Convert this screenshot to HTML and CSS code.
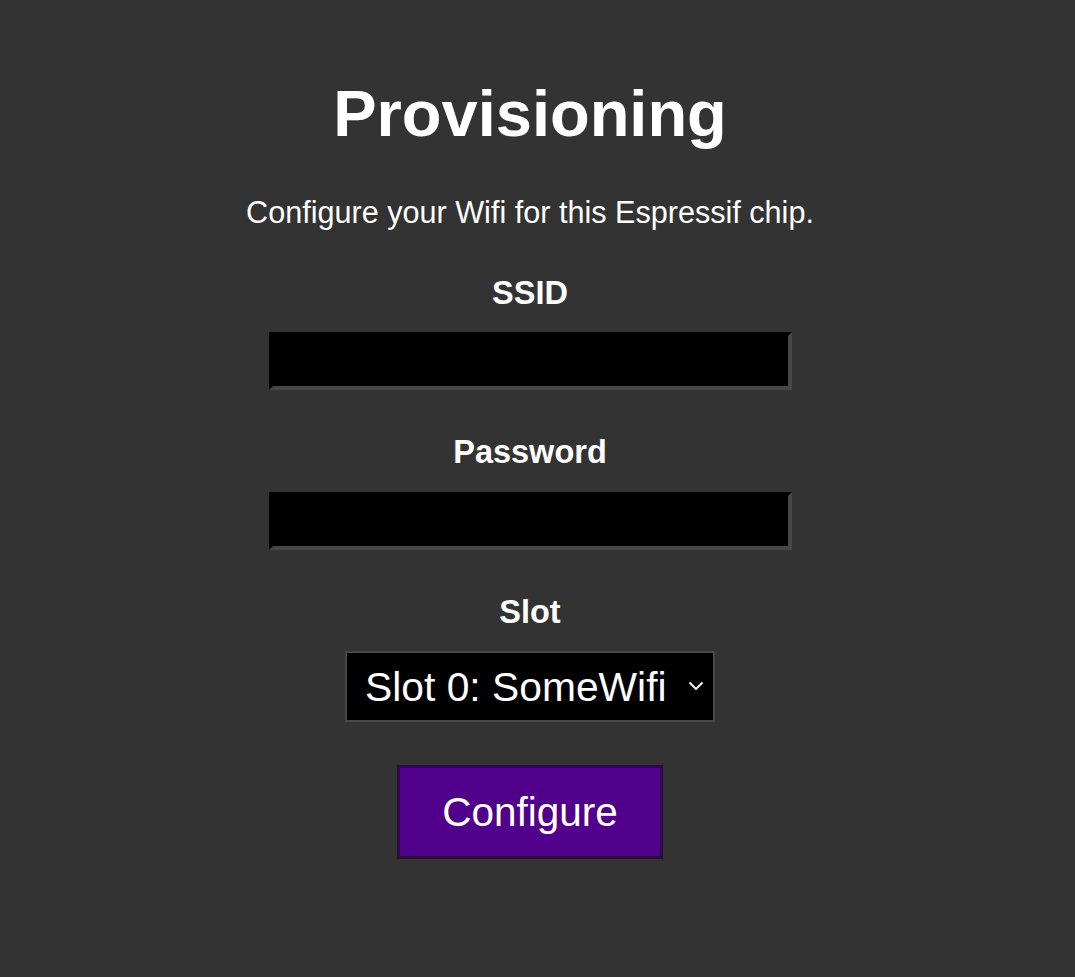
FILE: index.html
```html
<!DOCTYPE html>
<html lang="en">
<head>
<meta charset="utf-8">
<title>Provisioning</title>
<link rel="stylesheet" href="styles.css">
</head>
<body>
<main class="page">
  <h1 class="title">Provisioning</h1>
  <p class="intro">Configure your Wifi for this Espressif chip.</p>
  <form class="form">
    <label class="label" for="ssid">SSID</label>
    <input class="field" id="ssid" type="text">
    <label class="label label-gap" for="pw">Password</label>
    <input class="field" id="pw" type="password">
    <label class="label label-gap" for="slot">Slot</label>
    <div class="select-wrap">
      <select class="select" id="slot">
        <option>Slot 0: SomeWifi</option>
      </select>
      <svg class="chevron" width="16" height="10" viewBox="0 0 16 10" aria-hidden="true"><path d="M1.5 1.5 L8 8 L14.5 1.5" fill="none" stroke="#fff" stroke-width="1.8"/></svg>
    </div>
    <button class="button" type="button">Configure</button>
  </form>
</main>
</body>
</html>
```
FILE: styles.css
```css
html, body {
  margin: 0;
  padding: 0;
  background: #333333;
}
body {
  color: #ffffff;
  font-family: "Liberation Sans", Arial, sans-serif;
  min-height: 977px;
}
.page {
  display: flex;
  flex-direction: column;
  align-items: center;
  padding: 81px 15px 0 0;
}
.title {
  margin: 0;
  font-size: 65px;
  line-height: 1;
  font-weight: bold;
}
.intro {
  margin: 51px 0 0;
  font-size: 30.6px;
  line-height: 1;
}
.form {
  display: flex;
  flex-direction: column;
  align-items: center;
  margin-top: 49px;
}
.label {
  font-size: 32.5px;
  line-height: 1;
  font-weight: bold;
  margin-bottom: 23px;
}
.label-gap {
  margin-top: 46px;
}
.field {
  box-sizing: border-box;
  width: 523px;
  height: 58px;
  background: #000;
  color: #fff;
  border-style: solid;
  border-width: 4px;
  border-color: #000 #474747 #474747 #000;
  margin: 0;
  padding: 0 10px;
  font-size: 30px;
  font-family: inherit;
  outline: none;
}
.select-wrap {
  position: relative;
}
.select {
  box-sizing: border-box;
  width: 370px;
  height: 71px;
  appearance: none;
  -webkit-appearance: none;
  background: #000;
  color: #fff;
  border: 2px solid #474747;
  border-radius: 0;
  margin: 0;
  padding: 0 0 0 18px;
  font-family: "Liberation Sans", Arial, sans-serif;
  font-size: 40.8px;
  outline: none;
}
.chevron {
  position: absolute;
  right: 11px;
  top: 30px;
  pointer-events: none;
}
.button {
  box-sizing: border-box;
  margin-top: 43px;
  width: 266px;
  height: 94px;
  background: #51008c;
  color: #fff;
  border: 3px solid #2c0a43;
  border-radius: 0;
  font-family: "Liberation Sans", Arial, sans-serif;
  font-size: 40.5px;
  padding: 0;
}
```
